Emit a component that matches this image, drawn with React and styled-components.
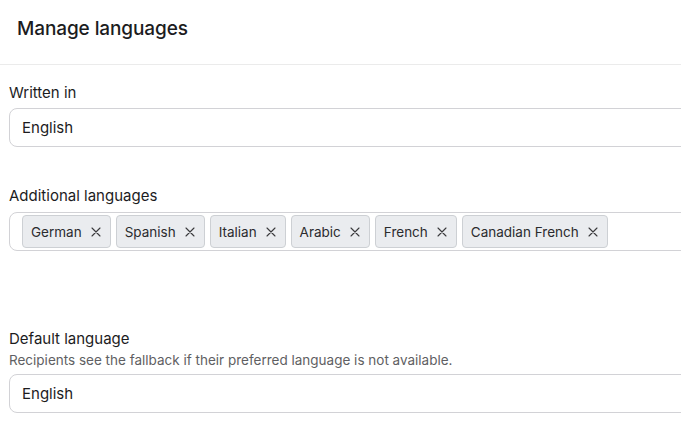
import React from 'react'
import styled, { createGlobalStyle } from 'styled-components'

const GlobalStyle = createGlobalStyle`
    html, body {
        margin: 0;
        padding: 0;
        background: #ffffff;
        overflow: hidden;
    }
    body {
        font-family: Inter, "Noto Sans", "Liberation Sans", sans-serif;
        color: #1c1c1e;
    }
`

const Page = styled.div`
    width: 681px;
    height: 440px;
    overflow: hidden;
`

const Header = styled.header`
    height: 65px;
    box-sizing: border-box;
    padding: 17px 17px 0;
    border-bottom: 1px solid #ebebeb;
`

const Title = styled.h1`
    margin: 0;
    font-size: 19px;
    line-height: 24px;
    font-weight: 500;
    letter-spacing: -0.1px;
`

const Form = styled.div`
    padding: 0 0 0 9px;
    margin-right: -40px;
`

const Field = styled.div`
    display: flex;
    flex-direction: column;
    margin-top: ${({ $offset }) => $offset}px;
`

const Label = styled.label`
    font-size: 15px;
    line-height: 20px;
    color: #1c1c1e;
`

const Helper = styled.p`
    margin: 2px 0 0;
    font-size: 13.5px;
    line-height: 18px;
    color: #5f5f63;
`

const Input = styled.div`
    margin-top: ${({ $gap }) => $gap}px;
    height: 39px;
    box-sizing: border-box;
    border: 1px solid #d2d2d6;
    border-radius: 8px;
    padding: 0 12px;
    display: flex;
    align-items: center;
    font-size: 15px;
    color: #1c1c1e;
`

const TagInput = styled(Input)`
    padding: 2px 12px;
    gap: 5px;
    align-items: stretch;
`

const Tag = styled.span`
    display: flex;
    align-items: center;
    gap: 9px;
    padding: 0 9px 0 8px;
    background: #eaecef;
    border: 1px solid #cdd0d4;
    border-radius: 4px;
    font-size: 13.5px;
    color: #2b2b2e;
    white-space: nowrap;

    > svg {
        width: 10px;
        height: 10px;
        flex: none;
    }
`

function CloseIcon()
{
    return (
        <svg viewBox="0 0 10 10" fill="none" stroke="#3a3a3c" strokeWidth="1.1" strokeLinecap="round">
            <path d="M1 1L9 9M9 1L1 9" />
        </svg>
    )
}

const languages = ['German', 'Spanish', 'Italian', 'Arabic', 'French', 'Canadian French']

export default function App()
{
    return (
        <Page>
            <GlobalStyle />
            <Header>
                <Title>Manage languages</Title>
            </Header>
            <Form>
                <Field $offset={18}>
                    <Label>Written in</Label>
                    <Input $gap={5}>English</Input>
                </Field>
                <Field $offset={39}>
                    <Label>Additional languages</Label>
                    <TagInput $gap={6}>
                        {languages.map((lang) =>
                            <Tag key={lang}>{lang}<CloseIcon /></Tag>
                        )}
                    </TagInput>
                </Field>
                <Field $offset={78}>
                    <Label>Default language</Label>
                    <Helper>Recipients see the fallback if their preferred language is not available.</Helper>
                    <Input $gap={5}>English</Input>
                </Field>
            </Form>
        </Page>
    )
}
